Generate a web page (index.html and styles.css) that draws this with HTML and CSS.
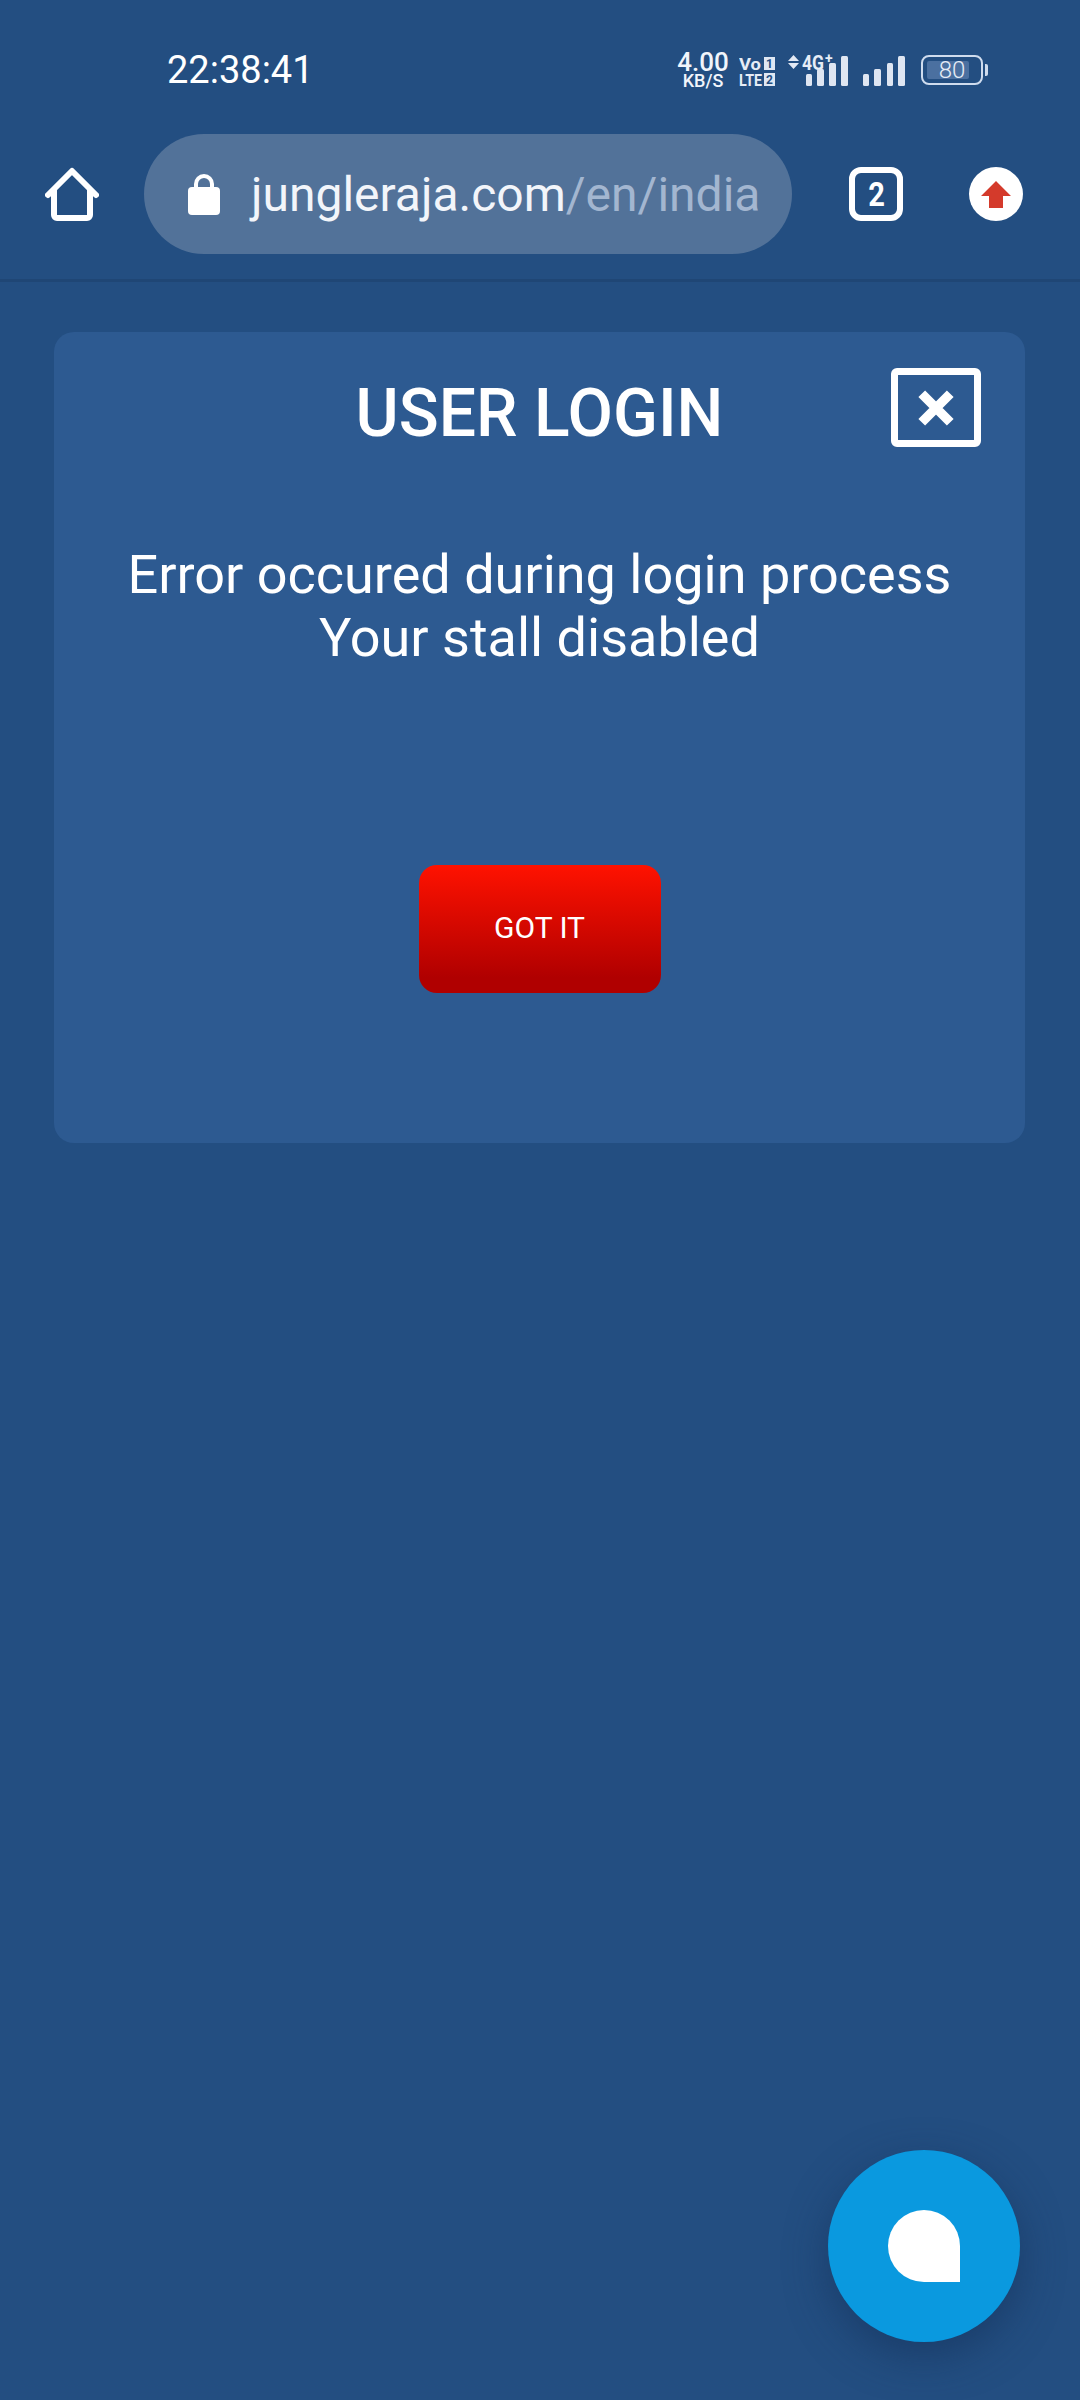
FILE: index.html
```html
<!DOCTYPE html>
<html lang="en">
<head>
    <meta charset="UTF-8">
    <meta name="viewport" content="width=device-width, initial-scale=1.0">
    <title>User login</title>
    <link rel="stylesheet" href="styles.css">
</head>
<body>
    <div class="status">
        <span class="clock">22:38:41</span>
        <div class="status-icons">
            <div class="speed"><b>4.00</b><span>KB/S</span></div>
            <svg class="sim" width="36" height="40" viewBox="0 -4 36 40">
                <text x="0" y="16" textLength="22" lengthAdjust="spacingAndGlyphs" class="sim-text">Vo</text>
                <rect x="25" y="3" width="11" height="13" fill="#dfe7f3"/>
                <text x="30.5" y="14" text-anchor="middle" class="sim-num">1</text>
                <text x="0" y="32" textLength="23" lengthAdjust="spacingAndGlyphs" class="sim-text">LTE</text>
                <rect x="25" y="19" width="11" height="13" fill="#dfe7f3"/>
                <text x="30.5" y="30" text-anchor="middle" class="sim-num">2</text>
            </svg>
            <svg class="signal" width="117" height="40" viewBox="0 -4 117 40">
                <path d="M5.5 1l5.5 6H0zM5.5 15L0 9h11z" fill="#e3e9f4"/>
                <text x="14" y="16" textLength="22" lengthAdjust="spacingAndGlyphs" class="net-text">4G</text>
                <text x="37" y="9" class="net-plus">+</text>
                <g fill="#dfe6f2">
                    <rect x="18" y="20" width="6" height="12" rx="1.5"/>
                    <rect x="29" y="15" width="7" height="17" rx="1.5"/>
                    <rect x="41" y="9" width="7" height="23" rx="1.5"/>
                    <rect x="53" y="2" width="7" height="30" rx="1.5"/>
                    <rect x="75" y="20" width="6" height="12" rx="1.5"/>
                    <rect x="86" y="15" width="7" height="17" rx="1.5"/>
                    <rect x="99" y="9" width="6" height="23" rx="1.5"/>
                    <rect x="110" y="2" width="7" height="30" rx="1.5"/>
                </g>
            </svg>
            <div class="battery">
                <div class="battery-body">
                    <div class="battery-fill"></div>
                    <span class="battery-num">80</span>
                </div>
                <div class="battery-nub"></div>
            </div>
        </div>
    </div>

    <div class="toolbar">
        <svg class="home" width="54" height="54" viewBox="0 0 54 54">
            <path d="M3 28L27 4l24 24M9 23v25a3 3 0 0 0 3 3h30a3 3 0 0 0 3-3V23" fill="none" stroke="#fff" stroke-width="6" stroke-linecap="round" stroke-linejoin="round"/>
        </svg>
        <div class="url">
            <svg class="lock" width="32" height="42" viewBox="0 0 32 42">
                <path d="M8 16V11a8 8 0 0 1 16 0v5" fill="none" stroke="#fff" stroke-width="4"/>
                <rect x="0" y="14" width="32" height="28" rx="4" fill="#fff"/>
            </svg>
            <span class="url-text">jungleraja.com<span class="url-path">/en/india</span></span>
        </div>
        <div class="tabs"><span class="tabs-num">2</span></div>
        <div class="upload">
            <svg width="30" height="27" viewBox="0 0 30 27">
                <path d="M15 0l15 15h-8v12H8V15H0z" fill="#d43a2b"/>
            </svg>
        </div>
    </div>

    <div class="card">
        <div class="card-head">
            <h1 class="card-title">USER LOGIN</h1>
            <div class="close">
                <svg width="38" height="38" viewBox="0 0 40 40">
                    <path d="M5 5l30 30M35 5L5 35" stroke="#fff" stroke-width="10"/>
                </svg>
            </div>
        </div>
        <p class="card-msg">Error occured during login process<br>Your stall disabled</p>
        <button class="got-it">GOT IT</button>
    </div>

    <div class="chat">
        <div class="chat-bubble"></div>
    </div>
</body>
</html>
```

FILE: styles.css
```css
body {
    margin: 0;
    height: 2400px;
    overflow: hidden;
    position: relative;
    background-color: #234e81;
    color: #fff;
    font-family: Roboto, "Liberation Sans", sans-serif;
}

/* status bar */
.status {
    display: flex;
    align-items: center;
    height: 134px;
    padding: 6px 92px 0 167px;
    box-sizing: border-box;
}
.clock {
    font-size: 38px;
}
.status-icons {
    display: flex;
    align-items: center;
    margin-left: auto;
}
.speed {
    display: flex;
    flex-direction: column;
    align-items: center;
    width: 52px;
    margin-right: 10px;
    color: #f1f5fb;
}
.speed b {
    font-size: 26px;
    font-weight: 500;
    line-height: 22px;
}
.speed span {
    font-size: 18px;
    font-weight: 500;
    line-height: 16px;
}
.sim {
    margin-right: 13px;
}
.sim-text {
    font-size: 17px;
    font-weight: 700;
    fill: #e6ecf6;
}
.sim-num {
    font-size: 12px;
    font-weight: 700;
    fill: #234e81;
}
.net-text {
    font-size: 20px;
    font-weight: 700;
    fill: #e6ecf6;
}
.net-plus {
    font-size: 14px;
    font-weight: 700;
    fill: #e6ecf6;
}
.signal {
    margin-right: 16px;
}
.battery {
    display: flex;
    align-items: center;
    gap: 2px;
}
.battery-body {
    position: relative;
    display: flex;
    align-items: center;
    justify-content: center;
    width: 62px;
    height: 30px;
    box-sizing: border-box;
    border: 2px solid #cfdcee;
    border-radius: 8px;
}
.battery-fill {
    position: absolute;
    left: 4px;
    top: 4px;
    bottom: 4px;
    width: 42px;
    background-color: #4b70a0;
    border-radius: 2px;
}
.battery-num {
    position: relative;
    font-size: 24px;
    font-weight: 300;
    color: #e6ecf6;
}
.battery-nub {
    width: 3px;
    height: 12px;
    background-color: #cfdcee;
    border-radius: 0 2px 2px 0;
}

/* browser toolbar */
.toolbar {
    display: flex;
    align-items: center;
    height: 120px;
    padding-bottom: 25px;
    border-bottom: 3px solid #1f4675;
}
.home {
    margin-left: 45px;
}
.url {
    display: flex;
    align-items: center;
    width: 648px;
    height: 120px;
    margin-left: 45px;
    padding-left: 44px;
    box-sizing: border-box;
    background-color: #527299;
    border-radius: 60px;
}
.url-text {
    margin-left: 31px;
    font-size: 48px;
    white-space: nowrap;
    color: #f2f5fa;
}
.url-path {
    color: #a3b6d0;
}
.tabs {
    display: flex;
    align-items: center;
    justify-content: center;
    width: 54px;
    height: 54px;
    margin-left: 57px;
    box-sizing: border-box;
    border: 6px solid #fff;
    border-radius: 12px;
    font-size: 33px;
    font-weight: 700;
}
.tabs-num {
    transform: scaleX(0.88);
}
.upload {
    display: flex;
    align-items: center;
    justify-content: center;
    width: 54px;
    height: 54px;
    margin-left: 66px;
    background-color: #fff;
    border-radius: 50%;
}

/* login card */
.card {
    display: flex;
    flex-direction: column;
    align-items: center;
    margin: 50px 55px 0 54px;
    padding: 35px 0 150px;
    background-color: #2d5a91;
    border-radius: 20px;
}
.card-head {
    display: grid;
    grid-template-columns: 1fr auto 1fr;
    align-items: start;
    width: 100%;
}
.card-title {
    grid-column: 2;
    margin: 0;
    font-size: 66px;
    font-weight: 500;
    line-height: 93px;
}
.close {
    justify-self: end;
    display: flex;
    align-items: center;
    justify-content: center;
    width: 90px;
    height: 79px;
    margin: 1px 44px 0 0;
    box-sizing: border-box;
    border: 7px solid #fff;
    border-radius: 6px;
}
.card-msg {
    margin: 83px 0 0;
    font-size: 54px;
    line-height: 63px;
    text-align: center;
}
.got-it {
    width: 242px;
    height: 128px;
    margin-top: 196px;
    padding: 0 0 3px;
    border: 0;
    border-radius: 18px;
    background: linear-gradient(#ff1200, #b00000 88%);
    color: #fff;
    font-family: inherit;
    font-size: 30px;
}

/* chat button over the page */
.chat {
    position: absolute;
    left: 828px;
    top: 2150px;
    display: flex;
    align-items: center;
    justify-content: center;
    width: 192px;
    height: 192px;
    background-color: #0a99df;
    border-radius: 50%;
    box-shadow: 0 14px 40px rgba(20, 50, 90, 0.6);
}
.chat-bubble {
    width: 72px;
    height: 72px;
    background-color: #fff;
    border-radius: 50% 50% 0 50%;
}
```
